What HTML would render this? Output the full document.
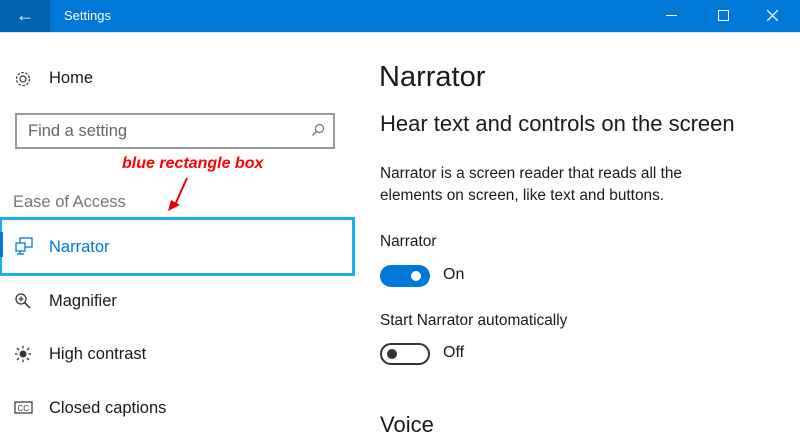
<!DOCTYPE html>
<html><head><style>
body{margin:0;width:800px;height:443px;overflow:hidden;background:#fff;font-family:"Liberation Sans",sans-serif;position:relative;color:#1a1a1a}
.a{position:absolute;white-space:nowrap}
.bar{position:absolute;left:0;top:0;width:800px;height:32px;background:#0078d7}
.back{position:absolute;left:0;top:0;width:50px;height:32px;background:#0063b1}
.side{font-size:16.5px}
</style></head><body>
<div class="bar"></div><div class="back"></div>
<div class="a" style="left:16px;top:5px;color:#fff;font-size:18px">&#8592;</div>
<div class="a" style="left:64px;top:8px;color:#fff;font-size:13px">Settings</div>
<div class="a" style="left:666px;top:15px;width:11px;height:1px;background:#fff"></div>
<div class="a" style="left:718px;top:10px;width:9px;height:9px;border:1px solid #fff"></div>
<svg class="a" style="left:767px;top:10px" width="11" height="11"><path d="M0 0L11 11M11 0L0 11" stroke="#fff" stroke-width="1.2"/></svg>
<div class="a" style="left:0;top:32px;width:800px;height:1px;background:#cfe3f5"></div>

<svg class="a" style="left:14px;top:70px" width="18" height="18" viewBox="0 0 18 18"><circle cx="9" cy="9" r="3" fill="none" stroke="#333" stroke-width="1.2"/><circle cx="9" cy="9" r="6.5" fill="none" stroke="#333" stroke-width="1.2" stroke-dasharray="2.5 1.6"/></svg>
<div class="a side" style="left:49px;top:69px">Home</div>
<div class="a" style="left:15px;top:113px;width:316px;height:32px;border:2px solid #999"></div>
<div class="a side" style="left:28px;top:122px;color:#666">Find a setting</div>
<svg class="a" style="left:311px;top:123px" width="14" height="14"><circle cx="8.5" cy="5.5" r="4" fill="none" stroke="#777" stroke-width="1.2"/><line x1="5.5" y1="8.5" x2="1.5" y2="12.5" stroke="#777" stroke-width="1.3"/></svg>
<div class="a" style="left:122px;top:155px;color:#f00;font-weight:bold;font-style:italic;font-size:16px">blue rectangle box</div>
<svg class="a" style="left:165px;top:175px" width="30" height="40"><line x1="22" y1="3" x2="9" y2="32" stroke="#e00" stroke-width="2"/><polygon points="3,36 6,25 15,30" fill="#e00"/></svg>
<div class="a" style="left:13px;top:193px;color:#767676;font-size:16.5px">Ease of Access</div>
<div class="a" style="left:0;top:217px;width:350px;height:53px;border:3px solid #1aaef0;border-left-width:2px"></div>
<div class="a" style="left:0;top:232px;width:3px;height:25px;background:#0078d7"></div>
<svg class="a" style="left:14px;top:236px" width="20" height="20"><rect x="6" y="2" width="12" height="9" fill="none" stroke="#0078d7" stroke-width="1.3"/><rect x="2" y="7" width="9" height="8" fill="#fff" stroke="#0078d7" stroke-width="1.3"/><line x1="6" y1="15" x2="6" y2="18" stroke="#0078d7" stroke-width="1.3"/><line x1="3" y1="18" x2="10" y2="18" stroke="#0078d7" stroke-width="1.3"/></svg>
<div class="a side" style="left:49px;top:238px;color:#0078d7">Narrator</div>
<svg class="a" style="left:14px;top:292px" width="18" height="18"><circle cx="7" cy="7" r="5" fill="none" stroke="#333" stroke-width="1.3"/><line x1="10.5" y1="10.5" x2="16" y2="16" stroke="#333" stroke-width="1.5"/><line x1="4.5" y1="7" x2="9.5" y2="7" stroke="#333" stroke-width="1.2"/><line x1="7" y1="4.5" x2="7" y2="9.5" stroke="#333" stroke-width="1.2"/></svg>
<div class="a side" style="left:49px;top:292px">Magnifier</div>
<svg class="a" style="left:14px;top:345px" width="18" height="18"><circle cx="9" cy="9" r="3.5" fill="#333"/><g stroke="#333" stroke-width="1.3"><line x1="9" y1="1" x2="9" y2="3.5"/><line x1="9" y1="14.5" x2="9" y2="17"/><line x1="1" y1="9" x2="3.5" y2="9"/><line x1="14.5" y1="9" x2="17" y2="9"/><line x1="3" y1="3" x2="5" y2="5"/><line x1="13" y1="13" x2="15" y2="15"/><line x1="3" y1="15" x2="5" y2="13"/><line x1="13" y1="5" x2="15" y2="3"/></g></svg>
<div class="a side" style="left:49px;top:345px">High contrast</div>
<svg class="a" style="left:14px;top:401px" width="20" height="14"><rect x="1" y="1" width="17" height="11" fill="none" stroke="#333" stroke-width="1.2"/><text x="3.5" y="10" font-size="8" font-family="Liberation Sans" fill="#333">CC</text></svg>
<div class="a side" style="left:49px;top:399px">Closed captions</div>

<div class="a" style="left:379px;top:61px;font-size:29px">Narrator</div>
<div class="a" style="left:380px;top:111px;font-size:22px">Hear text and controls on the screen</div>
<div class="a" style="left:380px;top:163px;font-size:15.4px;line-height:22px">Narrator is a screen reader that reads all the<br>elements on screen, like text and buttons.</div>
<div class="a" style="left:380px;top:233px;font-size:15.4px">Narrator</div>
<div class="a" style="left:380px;top:265px;width:50px;height:22px;border-radius:11px;background:#0078d7"></div>
<div class="a" style="left:411px;top:271px;width:10px;height:10px;border-radius:5px;background:#fff"></div>
<div class="a" style="left:443px;top:266px;font-size:16px">On</div>
<div class="a" style="left:380px;top:312px;font-size:15.4px">Start Narrator automatically</div>
<div class="a" style="left:380px;top:343px;width:46px;height:18px;border-radius:11px;border:2px solid #333"></div>
<div class="a" style="left:387px;top:349px;width:10px;height:10px;border-radius:5px;background:#333"></div>
<div class="a" style="left:443px;top:344px;font-size:16px">Off</div>
<div class="a" style="left:380px;top:412px;font-size:22px">Voice</div>
</body></html>
